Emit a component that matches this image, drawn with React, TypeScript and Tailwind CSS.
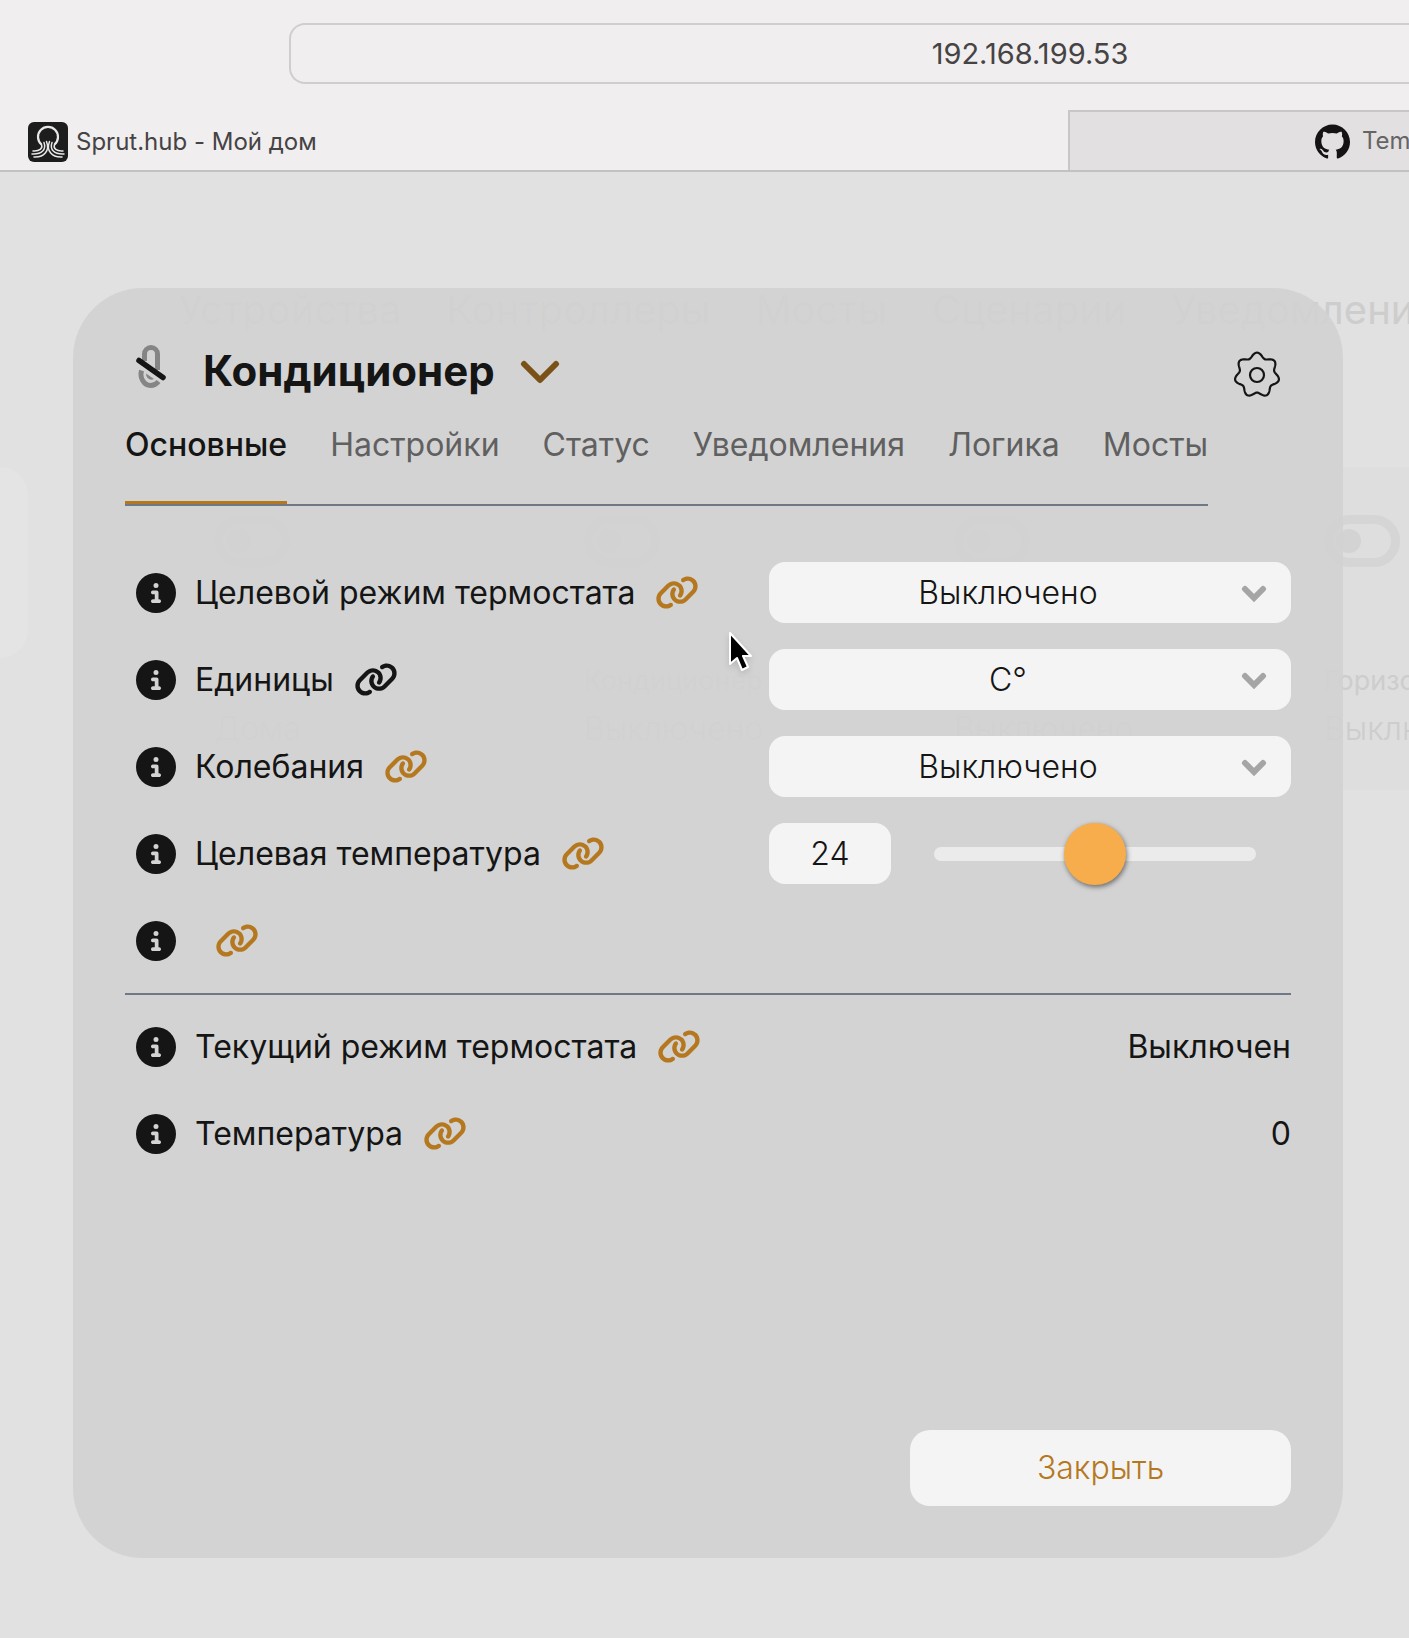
import React from 'react';
import { FaCircleInfo, FaLink } from 'react-icons/fa6';
import { SiGithub } from 'react-icons/si';

const tabs = ['Основные', 'Настройки', 'Статус', 'Уведомления', 'Логика', 'Мосты'];

const sections = ['Устройства', 'Контроллеры', 'Мосты', 'Сценарии', 'Уведомления'];

const tiles = [
  { name: '', state: 'Дома' },
  { name: 'Кондиционер', state: 'Выключено' },
  { name: 'Вентилятор', state: 'Выключено' },
  { name: 'Горизонтально', state: 'Выключено' },
];

// seven-lobed outline around (24, 24)
const gearPath =
  Array.from({ length: 140 }, (_, i) => {
    const a = (i / 140) * Math.PI * 2;
    const r = 20 + 2.4 * Math.cos(7 * a);
    return `${i === 0 ? 'M' : 'L'}${(24 + r * Math.sin(a)).toFixed(2)} ${(24 - r * Math.cos(a)).toFixed(2)}`;
  }).join('') + 'Z';

function SprutLogo() {
  return (
    <svg viewBox="0 0 40 40" className="size-10 shrink-0" fill="none" aria-hidden="true">
      <rect width="40" height="40" rx="6" fill="#1d1d1d" />
      <path d="M13.500 22.500A10 10 0 1 1 26.500 22.500" stroke="#e8e8e8" strokeWidth="2.200" />
      <g stroke="#e8e8e8" strokeWidth="1.500" strokeLinecap="round">
        <path d="M13.500 22.500c1.500 4-2 7-8.500 6.500M16 20.500c2.500 7-2 12-12 11.500M18.500 19.500c3.500 9-2 16-12.500 15.500" />
        <path d="M26.500 22.500c-1.500 4 2 7 8.500 6.500M24 20.500c-2.500 7 2 12 12 11.500M21.500 19.500c-3.500 9 2 16 12.500 15.500" />
      </g>
    </svg>
  );
}

function MicOff() {
  return (
    <svg viewBox="0 0 36 54" className="h-[54px] w-9" fill="none" aria-hidden="true">
      <path d="M10.500 17V10a6.500 6.500 0 0 1 13 0V26" stroke="#858585" strokeWidth="5" />
      <path d="M7.500 26.500C5.500 34 10 41.500 16.500 41.500c3.500 0 6-1.500 8-4" stroke="#858585" strokeWidth="5" />
      <path d="M12 29.500l8 5.500c-4 2-8-1-8-5.500z" fill="#858585" />
      <path d="M5 16.500L29 33.500" stroke="#151515" strokeWidth="5.500" strokeLinecap="round" />
    </svg>
  );
}

function BrowserBar() {
  return (
    <header className="overflow-hidden bg-[#f0eeef] text-[#454344]">
      <div className="flex h-[110px] pt-[23px]">
        <input
          aria-label="Адрес"
          defaultValue="192.168.199.53"
          className="ml-[289px] h-[61px] min-w-0 flex-1 rounded-l-2xl border-2 border-r-0 border-[#cfcdce] bg-transparent pl-[360px] text-center text-[29px] outline-none"
        />
      </div>
      <div className="flex h-[62px] border-b-2 border-[#c2c1c2] text-2xl">
        <a href="#home" className="flex flex-1 items-center gap-2 pt-1 pl-7">
          <SprutLogo />
          Sprut.hub - Мой дом
        </a>
        <a
          href="#github"
          className="flex w-[341px] items-center gap-3 overflow-hidden border-t-2 border-l-2 border-[#c8c6c7] bg-[#e2e0e1] pl-[245px] text-[#666465]"
        >
          <SiGithub className="size-[35px] shrink-0 text-[#151314]" />
          Tem
        </a>
      </div>
    </header>
  );
}

function Dashboard() {
  return (
    <div className="col-start-1 row-start-1 min-w-0 overflow-hidden pt-[112px] text-[#cdcdcd]" aria-hidden="true">
      <div className="flex gap-[45px] pl-[178px] text-[40px] leading-[52px] whitespace-nowrap">
        {sections.map((s) => (
          <span key={s}>{s}</span>
        ))}
      </div>
      <div className="mt-[131px] flex">
        <div className="h-[191px] w-7 shrink-0 rounded-r-[32px] bg-[#e4e4e4]" />
        <div className="ml-[84px] grid h-[323px] w-[1480px] shrink-0 grid-cols-4 bg-[#dedede]">
          {tiles.map((t, i) => (
            <div key={i} className="flex flex-col pt-12 pl-[102px] whitespace-nowrap">
              <div className="flex h-[52px] w-[76px] items-center rounded-full border-[9px] border-[#d5d5d5] pl-1">
                <div className="size-6 rounded-full bg-[#d3d3d3]" />
              </div>
              <span className="mt-[94px] h-10 text-[27px] leading-10">{t.name}</span>
              <span className="mt-1 text-[32px] leading-[48px] font-light">{t.state}</span>
            </div>
          ))}
        </div>
      </div>
    </div>
  );
}

function RowLabel({ id, text, linked = true }: { id?: string; text: string; linked?: boolean }) {
  return (
    <div className="flex h-[61px] items-center pl-[11px]">
      <button aria-label="Информация" className="mr-[19px]">
        <FaCircleInfo className="size-10" />
      </button>
      <label htmlFor={id} className="text-[32px] whitespace-nowrap">
        {text}
      </label>
      <button aria-label="Связь" className={linked ? 'ml-5 text-[#b5781f]' : 'ml-5'}>
        <FaLink className="h-[35px] w-11" />
      </button>
    </div>
  );
}

function Select({ id, options }: { id: string; options: string[] }) {
  return (
    <div className="relative w-[522px]">
      <select
        id={id}
        className="h-[61px] w-full appearance-none rounded-2xl bg-[#f4f4f4] pr-11 text-center text-[32px] font-light outline-none [text-align-last:center]"
      >
        {options.map((o) => (
          <option key={o}>{o}</option>
        ))}
      </select>
      <svg viewBox="0 0 26 18" className="pointer-events-none absolute top-[23px] right-6 h-[18px] w-[26px]" fill="none">
        <path d="M4 4l9 9 9-9" stroke="#a5a5a5" strokeWidth="6" strokeLinecap="round" />
      </svg>
    </div>
  );
}

function Modal() {
  return (
    <div
      role="dialog"
      aria-labelledby="title"
      className="relative z-10 col-start-1 row-start-1 mt-[116px] mr-[66px] mb-20 ml-[73px] flex min-h-[1270px] min-w-0 flex-col self-start rounded-[70px] bg-[#d2d2d2]/90 px-[52px] pb-[52px]"
    >
      <div className="flex items-center pt-[54px] pl-[9px]">
        <MicOff />
        <h1 id="title" className="ml-[33px] text-[42px] leading-[58px] font-bold">
          Кондиционер
        </h1>
        <button aria-label="Выбрать сервис" className="ml-[25px]">
          <svg viewBox="0 0 40 26" className="h-[26px] w-10" fill="none">
            <path d="M4 6l16 16L36 6" stroke="#7a5218" strokeWidth="6" strokeLinecap="round" strokeLinejoin="round" />
          </svg>
        </button>
        <button aria-label="Настройки устройства" className="mt-2 mr-[10px] ml-auto">
          <svg viewBox="0 0 48 48" className="size-12" fill="none" stroke="#151515" strokeWidth="2.2">
            <path d={gearPath} />
            <circle cx="24" cy="24" r="7" />
          </svg>
        </button>
      </div>

      <div role="tablist" className="flex gap-[43px] self-start border-b-2 border-[#6f7885] text-[32px]">
        {tabs.map((t, i) => (
          <button
            key={t}
            role="tab"
            aria-selected={i === 0}
            className={
              i === 0
                ? 'h-[104px] border-b-[3px] border-[#b5781f] pb-3 font-medium'
                : 'h-[104px] border-b-[3px] border-transparent pb-3 text-[#606060]'
            }
          >
            {t}
          </button>
        ))}
      </div>

      <div className="mt-14 flex flex-col gap-[26px]">
        <div className="flex justify-between">
          <RowLabel id="mode" text="Целевой режим термостата" />
          <Select id="mode" options={['Выключено', 'Нагрев', 'Охлаждение', 'Авто']} />
        </div>
        <div className="flex justify-between">
          <RowLabel id="units" text="Единицы" linked={false} />
          <Select id="units" options={['C°', 'F°']} />
        </div>
        <div className="flex justify-between">
          <RowLabel id="swing" text="Колебания" />
          <Select id="swing" options={['Выключено', 'Включено']} />
        </div>
        <div className="flex justify-between">
          <RowLabel id="target" text="Целевая температура" />
          <div className="flex w-[522px] items-center">
            <input
              id="target"
              defaultValue="24"
              className="h-[61px] w-[122px] rounded-2xl bg-[#f4f4f4] text-center text-[32px] font-light outline-none"
            />
            <input
              type="range"
              aria-label="Целевая температура"
              min={16}
              max={32}
              defaultValue={24}
              className="mr-[35px] ml-[43px] h-[14px] min-w-0 flex-1 appearance-none rounded-full bg-[#ebebeb] [&::-webkit-slider-thumb]:size-[62px] [&::-webkit-slider-thumb]:appearance-none [&::-webkit-slider-thumb]:rounded-full [&::-webkit-slider-thumb]:bg-[#f7ad4b] [&::-webkit-slider-thumb]:shadow-[1px_2px_5px_rgba(0,0,0,0.5)]"
            />
          </div>
        </div>
        <RowLabel text="" />
      </div>

      <hr className="mt-[22px] mb-[21px] border-t-2 border-[#6f7885]" />

      <div className="flex flex-col gap-[26px] text-[32px]">
        <div className="flex items-center justify-between">
          <RowLabel text="Текущий режим термостата" />
          <span>Выключен</span>
        </div>
        <div className="flex items-center justify-between">
          <RowLabel text="Температура" />
          <span>0</span>
        </div>
      </div>

      <button className="mt-auto h-[76px] w-[381px] self-end rounded-[20px] bg-[#f4f4f4] text-[32px] font-light text-[#b5781f]">
        Закрыть
      </button>

      {/* mouse pointer */}
      <svg viewBox="0 0 24 42" className="pointer-events-none absolute top-[343px] left-[655px] h-[42px] w-6 drop-shadow-md">
        <path
          d="M2 2v31l7-6 5 12 6-3-5-11h8z"
          fill="#000"
          stroke="#fff"
          strokeWidth="2"
          strokeLinejoin="round"
        />
      </svg>
    </div>
  );
}

export default function App() {
  return (
    <div className="min-h-screen bg-[#e1e1e1] font-['Inter',sans-serif] text-[#151515]">
      <BrowserBar />
      <main className="grid grid-cols-1">
        <Dashboard />
        <Modal />
      </main>
    </div>
  );
}
